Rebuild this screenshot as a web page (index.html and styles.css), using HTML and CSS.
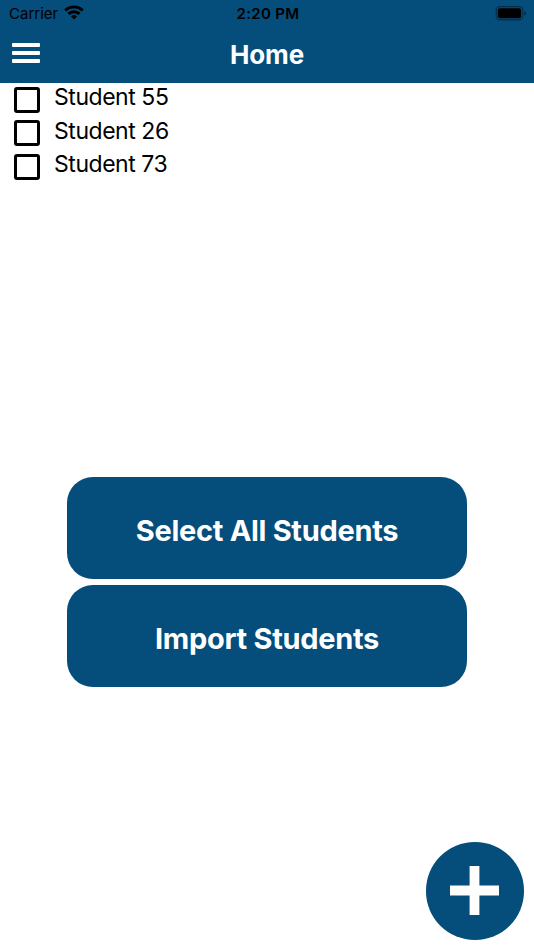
FILE: index.html
```html
<!DOCTYPE html>
<html lang="en">
<head>
    <meta charset="UTF-8">
    <meta name="viewport" content="width=device-width, initial-scale=1.0">
    <title>Home</title>
    <link rel="stylesheet" href="styles.css">
</head>
<body>
    <header>
        <div class="status-bar">
            <div class="carrier">
                <span>Carrier</span>
                <svg class="wifi" width="20" height="15" viewBox="0 0 20 15">
                    <g fill="none" stroke="#000" stroke-width="2.9">
                        <path d="M1.2 5.4a12.8 12.8 0 0 1 17.6 0"/>
                        <path d="M4.5 8.9a8 8 0 0 1 11 0"/>
                    </g>
                    <path d="M10 14.5l-3-3.1a4.3 4.3 0 0 1 6 0z"/>
                </svg>
            </div>
            <span class="time">2:20 PM</span>
            <svg class="battery" width="32" height="15" viewBox="0 0 32 15">
                <rect x="1.2" y="0.7" width="26.6" height="13.2" rx="3.6" fill="none" stroke="#000" stroke-opacity="0.4" stroke-width="1.2"/>
                <rect x="2.8" y="2.3" width="23.3" height="10" rx="2"/>
                <path d="M29.4 5.2q1.8.7 1.8 2.2t-1.8 2.2z" fill-opacity="0.45"/>
            </svg>
        </div>
        <div class="nav-bar">
            <button class="menu" aria-label="Menu">
                <span></span>
                <span></span>
                <span></span>
            </button>
            <h1>Home</h1>
        </div>
    </header>
    <main>
        <ul class="students">
            <li><span class="checkbox"></span><span class="name">Student 55</span></li>
            <li><span class="checkbox"></span><span class="name">Student 26</span></li>
            <li><span class="checkbox"></span><span class="name">Student 73</span></li>
        </ul>
        <div class="actions">
            <button class="action">Select All Students</button>
            <button class="action">Import Students</button>
        </div>
    </main>
    <button class="add" aria-label="Add student">
        <svg width="49" height="49" viewBox="0 0 50 50">
            <path d="M20 0h10v20h20v10H30v20H20V30H0V20h20z" fill="#fff"/>
        </svg>
    </button>
</body>
</html>
```

FILE: styles.css
```css
* {
    box-sizing: border-box;
}
body {
    font-family: Inter, "Liberation Sans", sans-serif;
    margin: 0;
    height: 950px;
    background-color: #fff;
    color: #000;
    overflow: hidden;
}
button {
    font-family: inherit;
    border: none;
    padding: 0;
    color: white;
}
header {
    height: 83px;
    background-color: #054d7b;
}
.status-bar {
    display: grid;
    grid-template-columns: 1fr auto 1fr;
    height: 27px;
    padding: 0 7px 0 9px;
    font-size: 15px;
    line-height: 28px;
}
.carrier {
    display: flex;
    gap: 6px;
}
.wifi {
    margin-top: 5px;
}
.time {
    font-weight: 600;
    letter-spacing: 0.3px;
}
.battery {
    justify-self: end;
    margin-top: 6px;
}
.nav-bar {
    display: grid;
    grid-template-columns: 28px 1fr 28px;
    height: 56px;
    padding: 0 12px;
}
.menu {
    display: flex;
    flex-direction: column;
    gap: 4px;
    padding-top: 16px;
    background: none;
}
.menu span {
    width: 28px;
    height: 4px;
    border-radius: 1px;
    background-color: white;
}
h1 {
    margin: 0;
    color: white;
    font-size: 26px;
    font-weight: 700;
    letter-spacing: -0.1px;
    line-height: 56px;
    text-align: center;
}
.students {
    list-style-type: none;
    height: 393.6px;
    margin: 0;
    padding: 0 0 0 14px;
}
.students li {
    display: flex;
    height: 33.5px;
}
.checkbox {
    width: 26px;
    height: 26px;
    margin: 3.9px 14px 0 0;
    border: 3px solid #000;
    border-radius: 3px;
}
.name {
    font-size: 23px;
    letter-spacing: -0.45px;
    line-height: 29px;
}
.actions {
    display: flex;
    flex-direction: column;
    align-items: center;
    gap: 5.6px;
}
.action {
    width: 400px;
    height: 102.4px;
    padding-top: 5px;
    border-radius: 26px;
    background-color: #054d7b;
    font-size: 29px;
    font-weight: 700;
    letter-spacing: -0.3px;
}
.add {
    position: absolute;
    right: 10.5px;
    bottom: 10.5px;
    display: flex;
    align-items: center;
    justify-content: center;
    width: 97.5px;
    height: 97.5px;
    border-radius: 50%;
    background-color: #054d7b;
}
```
